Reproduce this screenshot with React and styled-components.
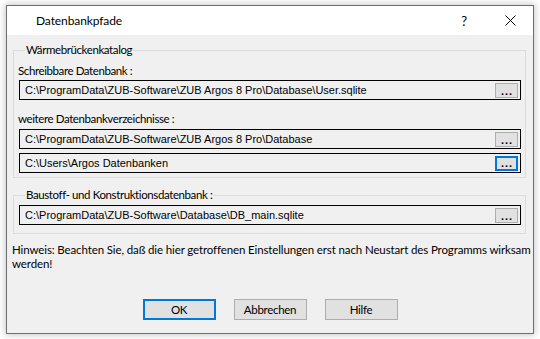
import React from "react";
import styled, { createGlobalStyle } from "styled-components";

const Global = createGlobalStyle`
  html, body { margin: 0; padding: 0; background: #ffffff; }
  body { width: 540px; height: 339px; overflow: hidden; }
`;

const Page = styled.div`
  padding: 5px 0 0 6px;
`;

const Window = styled.div`
  width: 528px;
  height: 329px;
  box-sizing: border-box;
  border: 1px solid #6e6e6e;
  background: #f0f0f0;
  box-shadow: 0 0 7px 1px rgba(0, 0, 0, 0.22);
  display: flex;
  flex-direction: column;
  font-family: Lato, "Noto Sans", sans-serif;
  font-size: 11.5px;
  letter-spacing: -0.3px;
  color: #000;
`;

const TitleBar = styled.div`
  height: 29px;
  background: #ffffff;
  display: flex;
  align-items: center;
  padding-left: 29px;
  flex-shrink: 0;
`;

const Title = styled.div`
  flex: 1;
  font-size: 12px;
  letter-spacing: -0.1px;
`;

const TitleButton = styled.div`
  width: ${(p) => p.$w}px;
  display: flex;
  justify-content: center;
  align-items: center;
  font-size: 13px;
`;

const Body = styled.div`
  flex: 1;
  display: flex;
  flex-direction: column;
  padding: 8px 7px 13px 6px;
`;

const Group = styled.fieldset`
  margin: ${(p) => p.$mt}px 0 0 0;
  padding: ${(p) => p.$pt}px 4px ${(p) => p.$pb}px 5px;
  border: 1px solid #dcdcdc;
  min-width: 0;
`;

const Legend = styled.legend`
  margin-left: 6px;
  padding: 0 1px;
  line-height: 14px;
  letter-spacing: -0.4px;
`;

const Label = styled.div`
  line-height: 14px;
  margin: ${(p) => p.$mt || 0}px 0 ${(p) => p.$mb || 0}px -1px;
  letter-spacing: -0.4px;
`;

const Field = styled.div`
  height: 20px;
  box-sizing: border-box;
  border: 1px solid #000;
  background: #f0f0f0;
  display: flex;
  align-items: center;
  padding: 0 2px 0 5px;
  margin-top: ${(p) => p.$mt || 0}px;
`;

const FieldText = styled.div`
  flex: 1;
  font-family: "Liberation Sans", Arial, sans-serif;
  font-size: 11px;
  letter-spacing: 0;
  white-space: nowrap;
  overflow: hidden;
`;

const Browse = styled.div`
  width: 23px;
  height: 15px;
  box-sizing: border-box;
  border: ${(p) => (p.$focus ? "2px solid #0078d7" : "1px solid #adadad")};
  background: #e1e1e1;
  display: flex;
  justify-content: center;
  align-items: flex-end;
  font-family: "Liberation Sans", Arial, sans-serif;
  font-weight: bold;
  font-size: 11px;
  line-height: 11px;
  letter-spacing: 1px;
  padding-left: 1px;
  margin-top: 1px;
`;

const Hint = styled.div`
  margin: 9px 0 0 -1px;
  line-height: 14px;
  letter-spacing: -0.12px;
`;

const HintLine = styled.div`
  white-space: nowrap;
`;

const Buttons = styled.div`
  margin-top: auto;
  display: flex;
  justify-content: center;
  gap: 18px;
  padding-left: 1px;
`;

const Button = styled.div`
  width: 73px;
  height: 21px;
  box-sizing: border-box;
  border: ${(p) => (p.$default ? "2px solid #0078d7" : "1px solid #adadad")};
  background: #e1e1e1;
  display: flex;
  justify-content: center;
  align-items: center;
`;

const PathField = ({ path, focus, mt }) => (
  <Field $mt={mt}>
    <FieldText>{path}</FieldText>
    <Browse $focus={focus}>...</Browse>
  </Field>
);

const CloseIcon = () => (
  <svg width="11" height="11" viewBox="0 0 11 11">
    <path d="M0.5 0.5 L10.5 10.5 M10.5 0.5 L0.5 10.5" stroke="#000" strokeWidth="1" />
  </svg>
);

export default function App() {
  return (
    <>
      <Global />
      <Page>
        <Window>
          <TitleBar>
            <Title>Datenbankpfade</Title>
            <TitleButton $w={46}>?</TitleButton>
            <TitleButton $w={46}>
              <CloseIcon />
            </TitleButton>
          </TitleBar>
          <Body>
            <Group $mt={0} $pt={7} $pb={4}>
              <Legend>Wärmebrückenkatalog</Legend>
              <Label $mb={2}>Schreibbare Datenbank :</Label>
              <PathField path="C:\ProgramData\ZUB-Software\ZUB Argos 8 Pro\Database\User.sqlite" />
              <Label $mt={12} $mb={3}>weitere Datenbankverzeichnisse :</Label>
              <PathField path="C:\ProgramData\ZUB-Software\ZUB Argos 8 Pro\Database" />
              <PathField mt={4} focus path="C:\Users\Argos Datenbanken" />
            </Group>
            <Group $mt={10} $pt={3} $pb={8}>
              <Legend>Baustoff- und Konstruktionsdatenbank :</Legend>
              <PathField path="C:\ProgramData\ZUB-Software\Database\DB_main.sqlite" />
            </Group>
            <Hint>
              <HintLine>
                Hinweis: Beachten Sie, daß die hier getroffenen Einstellungen erst nach Neustart des Programms wirksam
              </HintLine>
              <HintLine>werden!</HintLine>
            </Hint>
            <Buttons>
              <Button $default>OK</Button>
              <Button>Abbrechen</Button>
              <Button>Hilfe</Button>
            </Buttons>
          </Body>
        </Window>
      </Page>
    </>
  );
}
